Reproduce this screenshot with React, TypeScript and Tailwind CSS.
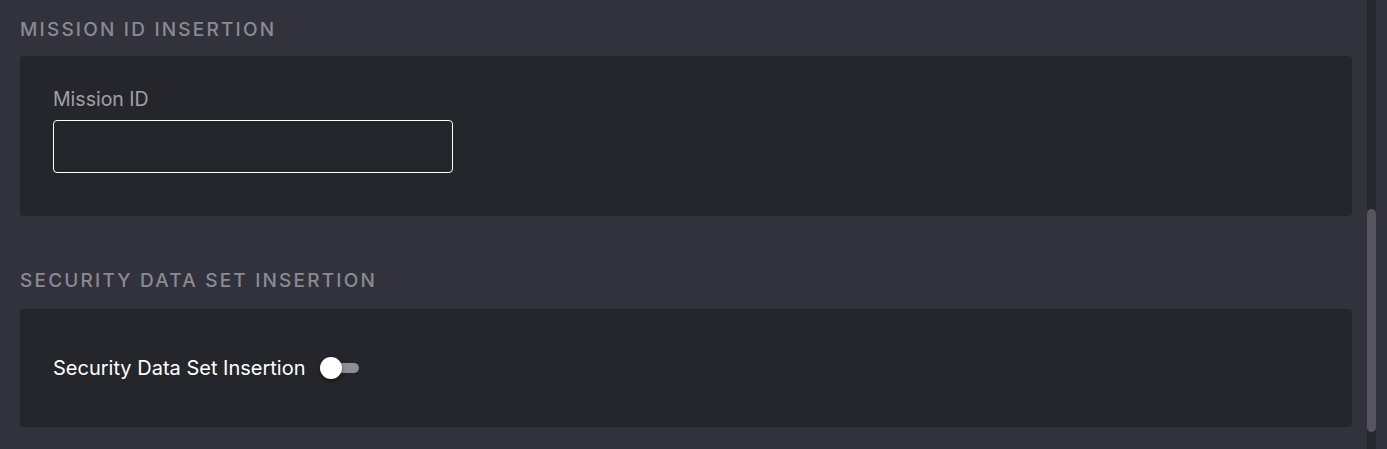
import { useState } from "react";

function Toggle() {
  const [on, setOn] = useState(false);
  return (
    <button
      onClick={() => setOn((v) => !v)}
      className="relative inline-flex h-[22px] w-[40px] items-center"
    >
      <span className="h-[10px] w-[38px] ml-[1px] rounded-full bg-[#8e8e99]" />
      <span
        className={
          "absolute top-0 h-[22px] w-[22px] rounded-full bg-white shadow-[0_2px_4px_rgba(0,0,0,0.45)] " +
          (on ? "left-[18px]" : "left-0")
        }
      />
    </button>
  );
}

export default function App() {
  const [missionId, setMissionId] = useState("");

  return (
    <div
      className="relative h-[449px] w-full overflow-hidden bg-[#32323c] pl-[20px] pr-[35px] pt-[18px]"
      style={{ fontFamily: "Inter, 'Liberation Sans', sans-serif" }}
    >
      <h2 className="text-[19px] leading-[24px] font-medium tracking-[2.2px] text-[#8a8a94]">
        MISSION ID INSERTION
      </h2>
      <section className="mt-[14px] rounded-[4px] bg-[#25262b] pl-[33px] pt-[31px] pb-[43px]">
        <label className="block text-[19.5px] leading-[24px] text-[#a0a0a8]">Mission ID</label>
        <input
          value={missionId}
          onChange={(e) => setMissionId(e.target.value)}
          className="mt-[9px] block h-[53px] w-[400px] rounded-[4px] border border-white bg-transparent px-3 text-[18px] text-white outline-none"
        />
      </section>

      <h2 className="mt-[53px] text-[19px] leading-[24px] font-medium tracking-[2.2px] text-[#8a8a94]">
        SECURITY DATA SET INSERTION
      </h2>
      <section className="mt-[16px] flex h-[118px] items-center gap-[14px] rounded-[4px] bg-[#25262b] pl-[33px]">
        <span className="text-[20px] leading-[24px] text-white">Security Data Set Insertion</span>
        <Toggle />
      </section>

      {/* scrollbar */}
      <div className="absolute right-[11px] top-0 h-full w-[9px] bg-[#26262d]">
        <div className="absolute left-0 top-[209px] h-[223px] w-[9px] rounded-full bg-[#55545f]" />
      </div>
    </div>
  );
}
